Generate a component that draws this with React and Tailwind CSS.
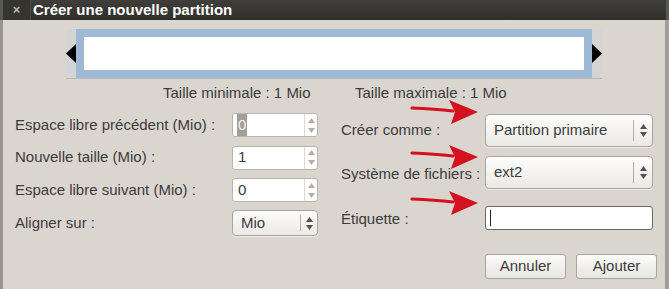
const font = { fontFamily: '"Liberation Sans", Arial, sans-serif' };

const Tri = ({ up, color = "#b3afa8" }) => (
  <svg width="7" height="5" viewBox="0 0 7 5">
    <polygon points={up ? "3.5,0 7,5 0,5" : "0,0 7,0 3.5,5"} fill={color} />
  </svg>
);

const Spin = ({ value, selected }) => (
  <div className="flex h-[24px] w-[86px] rounded-[3px] border border-[#b9b5ae] bg-white">
    <div className="flex flex-1 items-center pl-[4px] text-[15px] text-[#3c3c3c]">
      <span className={selected ? "bg-[#a39e97] px-[1px] text-[#f2f2f2]" : "px-[1px]"}>{value}</span>
    </div>
    <div className="flex w-[13px] flex-col items-center justify-center gap-[5px] border-l border-[#dcd9d4]">
      <Tri up />
      <Tri />
    </div>
  </div>
);

const Combo = ({ value, w, h, sep }) => (
  <div
    className={`flex items-center rounded-[4px] border border-[#a9a59e] bg-gradient-to-b from-[#fdfdfc] to-[#ebe9e5] shadow-[0_1px_0_rgba(255,255,255,0.5)] ${w} ${h}`}
  >
    <span className={`pl-[8px] text-[15px] text-[#3c3c3c] ${sep}`}>{value}</span>
    <div className="h-[70%] w-px bg-[#b0aca6]" />
    <div className="flex flex-1 flex-col items-center justify-center gap-[3px]">
      <Tri up color="#55524e" />
      <Tri color="#55524e" />
    </div>
  </div>
);

const Arrow = ({ y }) => (
  <svg className="absolute left-[405px]" style={{ top: y }} width="80" height="30" viewBox="0 0 80 30">
    <path d="M7 8 C20 8.5 35 9.5 48 11" stroke="#d3111f" strokeWidth="3.2" fill="none" strokeLinecap="round" />
    <polygon points="44,0 73,12 46,24 50,12" fill="#d3111f" />
  </svg>
);

export default function App() {
  return (
    <div style={font} className="relative flex h-[289px] w-[669px] flex-col overflow-hidden bg-[#dad6cf]">
      <div className="flex h-[20px] items-stretch border-x-[3px] border-[#5a5853] bg-gradient-to-b from-[#403e3a] to-[#2f2e2a]">
        <div className="flex w-[27px] items-center justify-center bg-[#35342f] text-[13px] font-bold text-[#b9b6b0]">×</div>
        <div className="w-px bg-[#4a4843]" />
        <span className="pl-[2px] pt-[1px] text-[15px] font-bold leading-[18px] text-white">Créer une nouvelle partition</span>
      </div>

      <div className="flex flex-1 flex-col border-l-[3px] border-r-[4px] border-l-[#99958e] border-r-[#a29e97]">
        <div className="mt-[9px] flex h-[50px] justify-center">
          <div className="flex w-[536px] border-b border-[#b9b9b9] bg-[#d4d4d4]">
            <div className="flex w-[10px] items-center">
              <svg width="10" height="19" viewBox="0 0 10 19">
                <polygon points="10,0 10,19 0,9.5" fill="#000" />
              </svg>
            </div>
            <div className="flex-1 border-[8px] border-[#9eb9d5] bg-white" />
            <div className="flex w-[10px] items-center">
              <svg width="10" height="19" viewBox="0 0 10 19">
                <polygon points="0,0 0,19 10,9.5" fill="#000" />
              </svg>
            </div>
          </div>
        </div>

        <div className="mt-[6px] flex h-[16px] pl-[160px] text-[15px] leading-[16px] text-[#3c3c3c]">
          <span className="w-[192px]">Taille minimale : 1 Mio</span>
          <span>Taille maximale : 1 Mio</span>
        </div>

        <div className="mt-[8px] flex items-start">
          <div className="grid w-[315px] grid-cols-[217px_86px] content-start pl-[12px] text-[15px] text-[#3c3c3c]">
            <div className="flex h-[32px] items-center">Espace libre précédent (Mio) :</div>
            <div className="flex h-[32px] items-center"><Spin value="0" selected /></div>
            <div className="flex h-[33px] items-center">Nouvelle taille (Mio) :</div>
            <div className="flex h-[33px] items-center"><Spin value="1" /></div>
            <div className="flex h-[32px] items-center">Espace libre suivant (Mio) :</div>
            <div className="flex h-[32px] items-center"><Spin value="0" /></div>
            <div className="flex h-[34px] items-center">Aligner sur :</div>
            <div className="flex h-[34px] items-center"><Combo value="Mio" w="w-[86px]" h="h-[26px]" sep="w-[67px]" /></div>
          </div>

          <div className="flex flex-1 flex-col pl-[23px] pt-[5px] text-[15px] text-[#3c3c3c]">
            <div className="flex h-[33px] items-center">
              <span className="w-[144px]">Créer comme :</span>
              <Combo value="Partition primaire" w="w-[168px]" h="h-[33px]" sep="w-[147px]" />
            </div>
            <div className="mt-[9px] flex h-[33px] items-center">
              <span className="w-[144px] pt-[3px]">Système de fichiers :</span>
              <Combo value="ext2" w="w-[168px]" h="h-[33px]" sep="w-[147px]" />
            </div>
            <div className="mt-[17px] flex h-[24px] items-center">
              <span className="w-[144px] pt-[2px]">Étiquette :</span>
              <div className="flex h-[24px] w-[168px] items-center rounded-[3px] border border-[#6e6a64] bg-white pl-[4px]">
                <div className="h-[16px] w-px bg-[#222]" />
              </div>
            </div>
            <div className="mt-[24px] flex gap-[10px] pl-[144px]">
              <button className="h-[25px] w-[81px] rounded-[3px] border border-[#a9a59e] bg-gradient-to-b from-[#fbfbfa] to-[#e8e6e2] text-[15px] text-[#3c3c3c]">Annuler</button>
              <button className="h-[25px] w-[81px] rounded-[3px] border border-[#a9a59e] bg-gradient-to-b from-[#fbfbfa] to-[#e8e6e2] text-[15px] text-[#3c3c3c]">Ajouter</button>
            </div>
          </div>
        </div>
      </div>

      <Arrow y={100} />
      <Arrow y={145} />
      <Arrow y={191} />
    </div>
  );
}
